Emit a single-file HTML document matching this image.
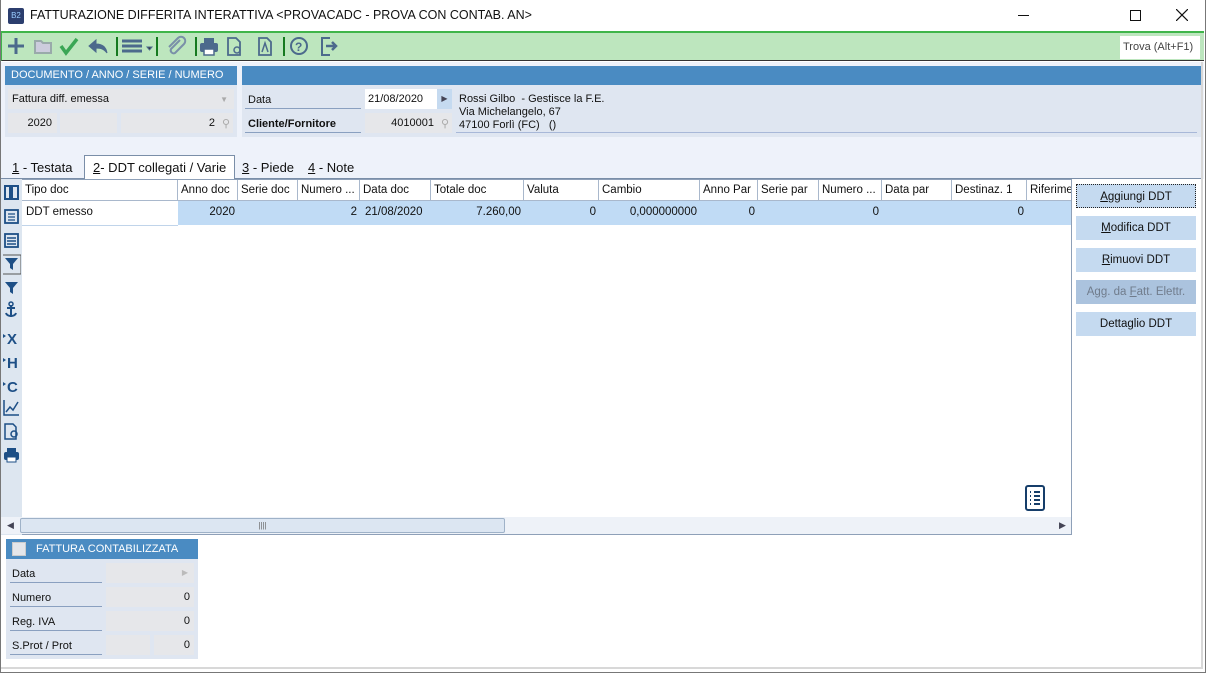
<!DOCTYPE html>
<html><head><meta charset="utf-8"><style>
*{box-sizing:border-box;margin:0;padding:0}
body{width:1206px;height:673px;position:relative;overflow:hidden;background:#fff;font-family:"Liberation Sans",sans-serif;font-size:12px;color:#111}
.a{position:absolute}
.t{white-space:nowrap}
.hdr{background:#4a8bc2;color:#fff;font-size:11px;padding:3px 6px}
.f{background:#e6e7ea}
.lbl{border-bottom:1px solid #8aa0c0}
.col{position:absolute;top:0;height:21px;border-right:1px solid #a9b8cc;padding:4px 3px;font-size:11.5px;white-space:nowrap;overflow:hidden}
.btn{position:absolute;left:1076px;width:120px;height:24px;background:#c5daf0;text-align:center;line-height:24px;font-size:11.5px}
</style></head><body>
<div class="a" style="left:0;top:0;width:1206px;height:673px;border:1px solid #777;border-top:none"></div>
<div class="a" style="left:8px;top:8px;width:16px;height:16px;background:#2c3e6e;border-radius:2px;color:#9cf;font-size:8px;text-align:center;line-height:16px">B2</div>
<div class="a t" style="left:30px;top:8px;font-size:12.5px">FATTURAZIONE DIFFERITA INTERATTIVA &lt;PROVACADC - PROVA CON CONTAB. AN&gt;</div>
<div class="a" style="left:1018px;top:15px;width:11px;height:1px;background:#111"></div>
<div class="a" style="left:1130px;top:10px;width:11px;height:11px;border:1px solid #111"></div>
<svg class="a" style="left:1176px;top:9px" width="12" height="12"><path d="M0 0L12 12M12 0L0 12" stroke="#111" stroke-width="1.2"/></svg>
<div class="a" style="left:1px;top:31px;width:1203px;height:30px;background:#bde6be;border-top:2px solid #3fb54a;border-bottom:1px solid #333;border-left:1px solid #3fb54a"></div>
<svg class="a" style="left:4px;top:34px" width="340" height="24" viewBox="0 0 340 24" fill="none" stroke="#4c6a8c" stroke-width="3">
<path d="M4 12h16M12 4v16"/>
<path d="M31 19V7h6l2 2h8v10z" stroke="#9aa" stroke-width="2" fill="#ccd"/>
<path d="M57 12l5 7 11-14" stroke="#3aa655" stroke-width="3.5"/>
<path d="M85 12l7-6v4c6 0 10 3 11 9-3-4-6-5-11-5v4z" fill="#4c6a8c" stroke-width="1"/>
<path d="M113 3v19M280 3v19M153 3v19M192 3v19" stroke="#157a1f" stroke-width="2"/>
<path d="M118 7h20M118 12h20M118 17h20"/>
<path d="M143 13h5l-2.5 3z" fill="#333" stroke-width="1"/>
<path d="M176 6l-9 9a3 3 0 004 4l9-9a4 4 0 00-6-6l-9 9" stroke-width="2" stroke="#7a90a8"/>
<rect x="196" y="9" width="18" height="9" rx="2" fill="#4c6a8c" stroke="none"/><rect x="200" y="4" width="10" height="5" fill="#4c6a8c" stroke="none"/><rect x="200" y="15" width="10" height="6" fill="#fff" stroke="#4c6a8c" stroke-width="1.5"/>
<path d="M224 4h8l4 4v13h-12z" stroke-width="1.8"/><circle cx="233" cy="16" r="3" stroke-width="1.5"/>
<path d="M255 4h8l4 4v13h-12z" stroke-width="1.8"/><path d="M258 18l3-9 3 9" stroke-width="1.5"/>
<circle cx="295" cy="12" r="8" stroke-width="2"/><text x="291" y="17" font-size="12" fill="#4c6a8c" stroke="none" font-weight="bold" font-family="Liberation Sans">?</text>
<path d="M326 4h-8v17h8" stroke-width="2"/><path d="M322 12h10M328 8l4 4-4 4" stroke-width="2.5"/>
</svg>
<div class="a t" style="left:1120px;top:36px;width:80px;height:23px;background:#fff;font-size:11px;color:#444;line-height:23px;padding-left:3px">Trova (Alt+F1)</div>
<div class="a" style="left:1px;top:62px;width:1203px;height:607px;background:#fff"></div>
<div class="a" style="left:1px;top:62px;width:1203px;height:117px;background:#eef2fa"></div>
<div class="a hdr t" style="left:5px;top:66px;width:232px;height:19px">DOCUMENTO / ANNO / SERIE / NUMERO</div>
<div class="a hdr" style="left:242px;top:66px;width:959px;height:19px"></div>
<div class="a" style="left:5px;top:85px;width:232px;height:52px;background:#dfe6f1"></div>
<div class="a" style="left:242px;top:85px;width:959px;height:52px;background:#dfe6f1"></div>
<div class="a f t" style="left:8px;top:89px;height:20px;padding:4px 4px;font-size:11px;width:226px">Fattura diff. emessa<span style="position:absolute;right:6px;color:#aaa;font-size:8px;top:6px">▼</span></div>
<div class="a f t" style="left:8px;top:113px;width:49px;height:20px;text-align:right;padding:4px 5px;font-size:11px">2020</div>
<div class="a f" style="left:60px;top:113px;width:57px;height:20px"></div>
<div class="a f t" style="left:121px;top:113px;height:20px;text-align:right;padding:4px 18px;font-size:11px;width:112px">2<span style="position:absolute;right:3px;color:#aaa">⚲</span></div>
<div class="a lbl t" style="left:245px;top:90px;width:116px;height:19px;padding:4px 3px;font-size:11px">Data</div>
<div class="a lbl t" style="left:245px;top:114px;width:116px;height:19px;padding:4px 3px;font-weight:bold;font-size:11px">Cliente/Fornitore</div>
<div class="a t" style="left:365px;top:89px;width:72px;height:20px;background:#fff;padding:4px 3px;font-size:11px">21/08/2020</div>
<div class="a" style="left:437px;top:89px;width:15px;height:20px;background:#c5daf0;color:#445;font-size:8px;text-align:center;line-height:20px">▶</div>
<div class="a f t" style="left:365px;top:113px;width:87px;height:20px;text-align:right;padding:4px 18px 0 0;font-size:11px">4010001<span style="position:absolute;right:3px;color:#aaa">⚲</span></div>
<div class="a t" style="left:459px;top:93px;font-size:11px;line-height:13px">Rossi Gilbo&nbsp; - Gestisce la F.E.<br>Via Michelangelo, 67<br>47100 Forlì (FC)&nbsp;&nbsp; ()</div>
<div class="a" style="left:456px;top:132px;width:741px;height:1px;background:#a8b8d8"></div>
<div class="a" style="left:1px;top:178px;width:1200px;height:1px;background:#7a8ea8"></div>
<div class="a t" style="left:12px;top:160px;font-size:13px"><u>1</u> - Testata</div>
<div class="a t" style="left:84px;top:155px;width:151px;height:24px;background:#fff;border:1px solid #7a8ea8;border-bottom:none;padding:4px 8px;font-size:13px"><u>2</u>- DDT collegati / Varie</div>
<div class="a t" style="left:242px;top:160px;font-size:13px"><u>3</u> - Piede</div>
<div class="a t" style="left:308px;top:160px;font-size:13px"><u>4</u> - Note</div>
<div class="a" style="left:1px;top:179px;width:21px;height:356px;background:#dde6f0"></div>
<svg class="a" style="left:3px;top:184px" width="18" height="280" viewBox="0 0 18 280" fill="#1d4f86" stroke="#1d4f86">
<rect x="2" y="2" width="13" height="13" fill="none" stroke-width="2"/><rect x="6" y="2" width="4" height="13" stroke="none"/>
<rect x="2" y="26" width="13" height="13" fill="none" stroke-width="1.8"/><path d="M5 30h7M5 33h7M5 36h7" stroke-width="1.2"/>
<rect x="2" y="50" width="13" height="13" fill="none" stroke-width="1.8"/><path d="M4 54h9M4 57h9M4 60h9" stroke-width="1.4"/>
<rect x="-1" y="71" width="19" height="19" fill="none" stroke="#555"/><path d="M2 74h13l-5 6v6l-3-2v-4z" stroke="none"/>
<path d="M2 98h13l-5 6v6l-3-2v-4z" stroke="none"/>
<path d="M8 121v12M4 124h8M3 129c1 4 9 4 10 0" fill="none" stroke-width="2"/><circle cx="8" cy="120" r="2" fill="none" stroke-width="1.5"/>
<text x="4" y="160" font-size="15" font-weight="bold" stroke="none" font-family="Liberation Sans">X</text>
<text x="4" y="184" font-size="15" font-weight="bold" stroke="none" font-family="Liberation Sans">H</text>
<text x="4" y="208" font-size="15" font-weight="bold" stroke="none" font-family="Liberation Sans">C</text>
<path d="M0 150l3 2-3 2zM0 174l3 2-3 2zM0 198l3 2-3 2z" stroke="none"/>
<path d="M1 216v15h15M3 228l4-5 3 3 5-8" fill="none" stroke-width="1.5"/>
<path d="M2 240h8l3 3v12H2z" fill="none" stroke-width="1.5"/><circle cx="11" cy="250" r="3" fill="none" stroke-width="1.5"/>
<rect x="1" y="268" width="15" height="8" rx="2" stroke="none"/><rect x="4" y="264" width="9" height="4" stroke="none"/><rect x="4" y="273" width="9" height="5" fill="#fff" stroke-width="1"/>
</svg>
<div class="a" style="left:22px;top:179px;width:1050px;height:356px;border:1px solid #8ea0b8;border-left:none"></div>
<div class="a" style="left:22px;top:180px;width:1049px;height:21px;border-bottom:1px solid #a9b8cc">
<div class="col" style="left:0;width:156px">Tipo doc</div>
<div class="col" style="left:156px;width:60px">Anno doc</div>
<div class="col" style="left:216px;width:60px">Serie doc</div>
<div class="col" style="left:276px;width:62px">Numero ...</div>
<div class="col" style="left:338px;width:71px">Data doc</div>
<div class="col" style="left:409px;width:93px">Totale doc</div>
<div class="col" style="left:502px;width:75px">Valuta</div>
<div class="col" style="left:577px;width:101px">Cambio</div>
<div class="col" style="left:678px;width:58px">Anno Par</div>
<div class="col" style="left:736px;width:61px">Serie par</div>
<div class="col" style="left:797px;width:63px">Numero ...</div>
<div class="col" style="left:860px;width:70px">Data par</div>
<div class="col" style="left:930px;width:75px">Destinaz. 1</div>
<div class="col" style="left:1005px;width:44px;border:none">Riferime</div>
</div>
<div class="a" style="left:178px;top:201px;width:893px;height:24px;background:#c0dbf5"></div>
<div class="a" style="left:22px;top:225px;width:156px;height:1px;background:#c0d4ea"></div>
<div class="a t" style="left:26px;top:206px;font-size:11.5px">DDT emesso</div>
<div class="a t" style="left:178px;top:206px;width:57px;text-align:right;font-size:11.5px">2020</div>
<div class="a t" style="left:298px;top:206px;width:59px;text-align:right;font-size:11.5px">2</div>
<div class="a t" style="left:365px;top:206px;font-size:11.5px">21/08/2020</div>
<div class="a t" style="left:431px;top:206px;width:90px;text-align:right;font-size:11.5px">7.260,00</div>
<div class="a t" style="left:524px;top:206px;width:72px;text-align:right;font-size:11.5px">0</div>
<div class="a t" style="left:599px;top:206px;width:98px;text-align:right;font-size:11.5px">0,000000000</div>
<div class="a t" style="left:700px;top:206px;width:55px;text-align:right;font-size:11.5px">0</div>
<div class="a t" style="left:819px;top:206px;width:60px;text-align:right;font-size:11.5px">0</div>
<div class="a t" style="left:952px;top:206px;width:72px;text-align:right;font-size:11.5px">0</div>
<svg class="a" style="left:1025px;top:485px" width="20" height="26" viewBox="0 0 20 26" fill="none" stroke="#163e6a" stroke-width="2"><rect x="1" y="1" width="18" height="24" rx="2"/><path d="M5 7h1M9 7h6M5 11h1M9 11h6M5 15h1M9 15h6M5 19h1M9 19h6"/></svg>
<div class="a" style="left:1px;top:517px;width:1070px;height:17px;background:#eef2f8"></div>
<div class="a" style="left:20px;top:518px;width:485px;height:15px;background:#dce6f2;border:1px solid #9fb2c8;border-radius:2px;text-align:center;font-size:8px;color:#666;line-height:13px">||||</div>
<div class="a" style="left:7px;top:520px;font-size:9px;color:#445">◀</div>
<div class="a" style="left:1059px;top:520px;font-size:9px;color:#445">▶</div>
<div class="btn" style="top:184px;border:1px dotted #222"><u>A</u>ggiungi DDT</div>
<div class="btn" style="top:216px"><u>M</u>odifica DDT</div>
<div class="btn" style="top:248px"><u>R</u>imuovi DDT</div>
<div class="btn" style="top:280px;background:#abc3de;color:#707c8c">Agg. da <u>F</u>att. Elettr.</div>
<div class="btn" style="top:312px">Dettaglio DDT</div>
<div class="a hdr t" style="left:6px;top:539px;width:192px;height:20px;padding:4px 0 0 30px">FATTURA CONTABILIZZATA</div>
<div class="a" style="left:12px;top:542px;width:14px;height:14px;background:#e4e6ea;border:1px solid #ccc"></div>
<div class="a" style="left:6px;top:559px;width:192px;height:100px;background:#dfe6f1"></div>
<div class="a lbl t" style="left:10px;top:564px;width:92px;height:19px;padding:4px 2px;font-size:11px">Data</div>
<div class="a lbl t" style="left:10px;top:588px;width:92px;height:19px;padding:4px 2px;font-size:11px">Numero</div>
<div class="a lbl t" style="left:10px;top:612px;width:92px;height:19px;padding:4px 2px;font-size:11px">Reg. IVA</div>
<div class="a lbl t" style="left:10px;top:636px;width:92px;height:19px;padding:4px 2px;font-size:11px">S.Prot / Prot</div>
<div class="a f" style="left:106px;top:563px;width:88px;height:20px;color:#bbb;font-size:8px;text-align:right;padding:5px 6px">▶</div>
<div class="a f t" style="left:106px;top:587px;width:88px;height:20px;text-align:right;padding:4px 4px;font-size:11px">0</div>
<div class="a f t" style="left:106px;top:611px;width:88px;height:20px;text-align:right;padding:4px 4px;font-size:11px">0</div>
<div class="a f" style="left:106px;top:635px;width:44px;height:20px"></div>
<div class="a f t" style="left:154px;top:635px;width:40px;height:20px;text-align:right;padding:4px 4px;font-size:11px">0</div>
<div class="a" style="left:1px;top:667px;width:1201px;height:2px;background:#d8d8d8"></div>
<div class="a" style="left:1201px;top:62px;width:2px;height:607px;background:#d8d8d8"></div>
</body></html>
